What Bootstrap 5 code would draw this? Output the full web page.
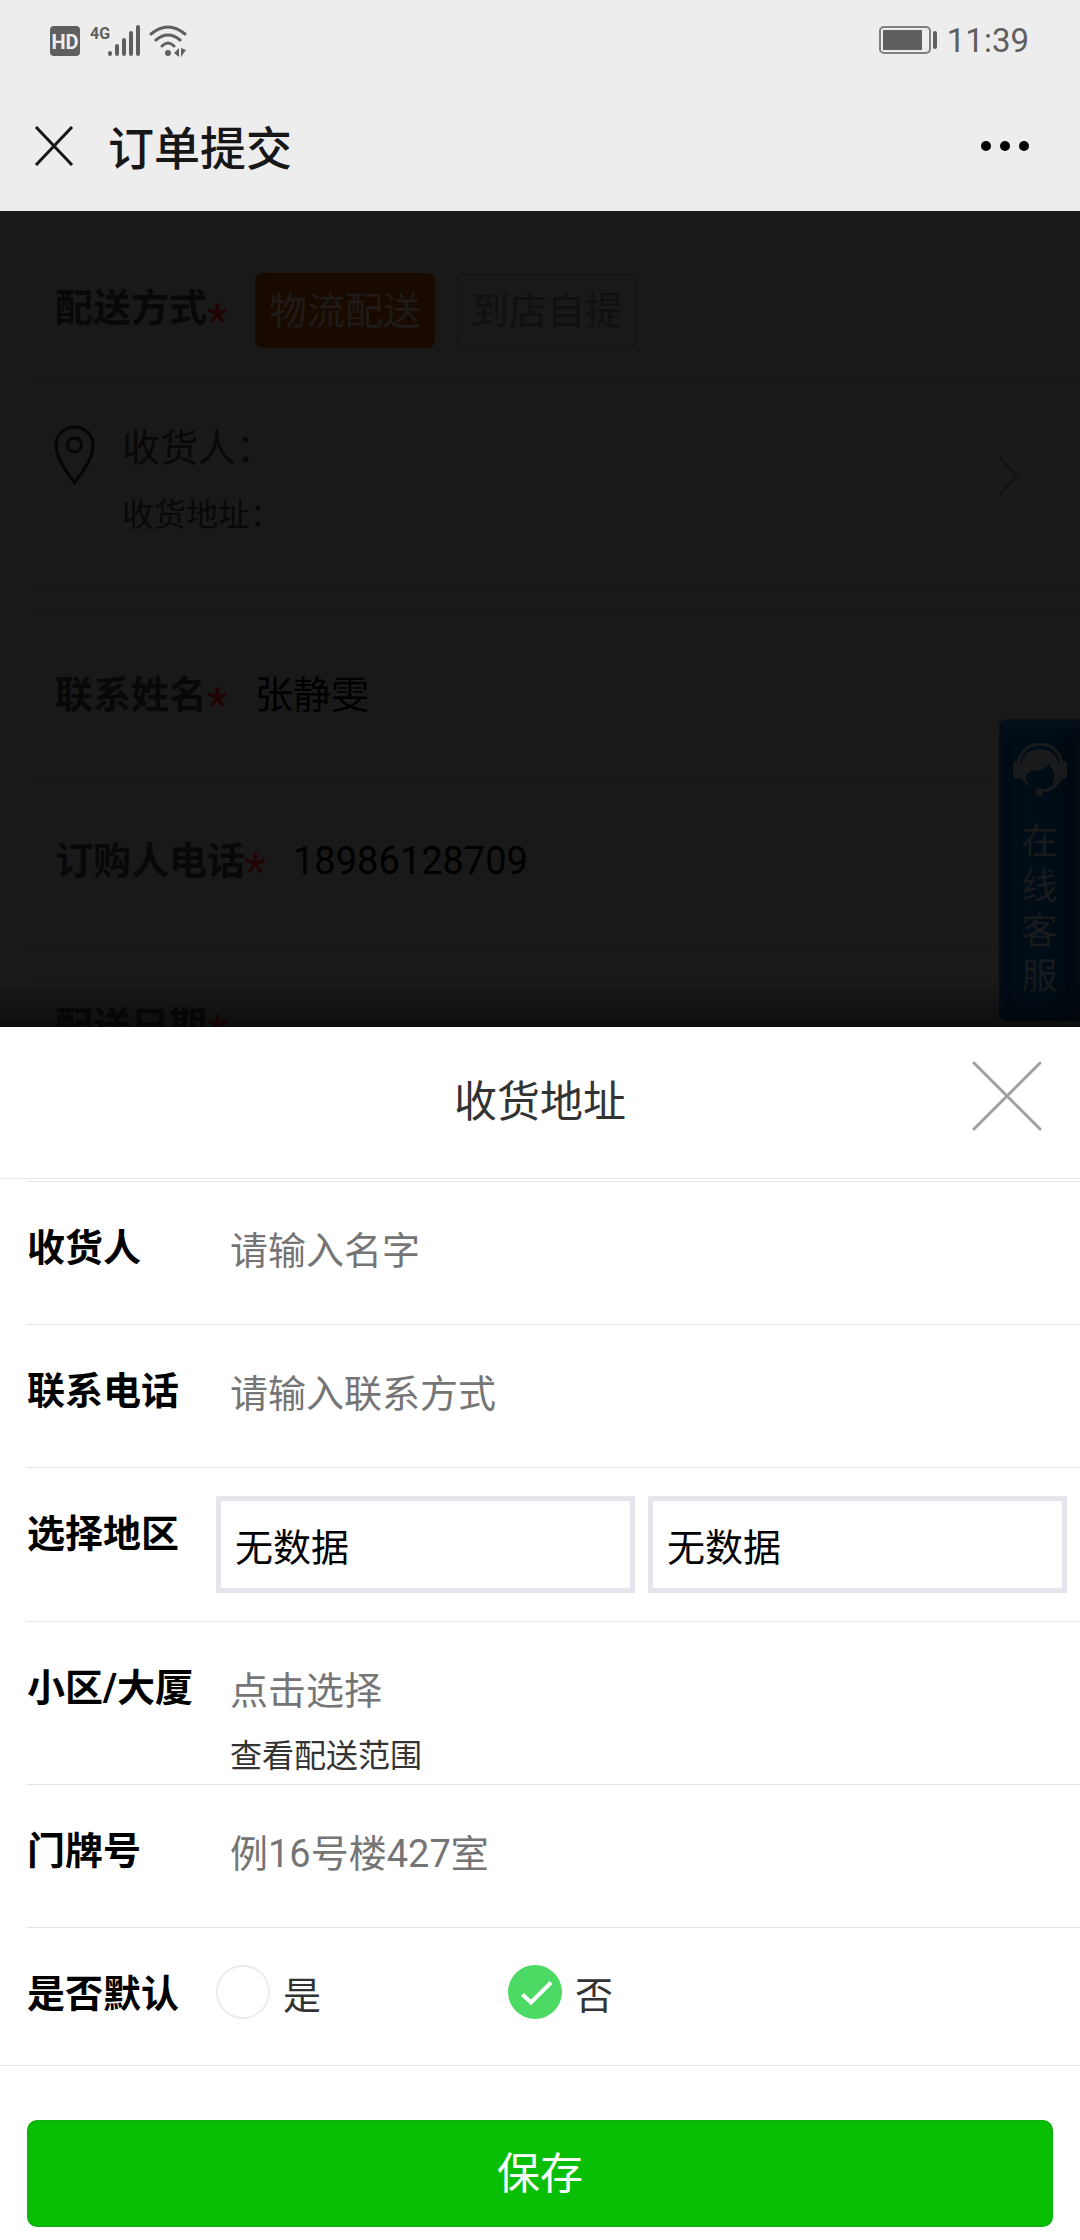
<!DOCTYPE html>
<html lang="zh-CN">
<head>
<meta charset="utf-8">
<meta name="viewport" content="width=device-width, initial-scale=1">
<title>订单提交</title>
<link href="https://cdn.jsdelivr.net/npm/bootstrap@5.3.0/dist/css/bootstrap.min.css" rel="stylesheet">
<script src="https://cdn.jsdelivr.net/npm/bootstrap@5.3.0/dist/js/bootstrap.bundle.min.js" defer></script>
<style>
  body { font-family: Roboto, "Noto Sans CJK SC", sans-serif; font-size: 38px; line-height: 54px; background: #fff; color: #333; }
  svg { display: block; flex: none; }
  .bare { border: 0; background: none; padding: 0; color: inherit; }
  .text-small { font-size: 32px; line-height: 48px; }

  .top-area { background: #ededed; color: #171717; }
  .status-bar { height: 80px; padding: 0 51px 0 50px; color: #5f5f5f; }
  .clock { font-size: 33px; line-height: 40px; padding-top: 2px; }
  .title-bar { height: 131px; padding: 0 51px 0 34px; }
  .title-bar h1 { font-size: 46px; line-height: 60px; font-weight: 500; padding: 6px 0 0 34px; }

  /* order page, dimmed while the address sheet is open */
  .order { background: #191919; color: #080808; height: 816px; overflow: hidden; position: relative; }
  .order-row { margin-left: 27px; padding: 52px 28px 59px; border-bottom: 1px solid #161616; display: flex; }
  .order-row label, .key-bold { font-weight: 700; }
  .order-row.ways { padding: 62px 28px 34px; align-items: center; }
  .ways .key-bold { padding-bottom: 6px; }
  .order-row.to { padding: 38px 61px 48px 27px; gap: 27px; }
  .order-row.gap-line { padding: 0; height: 28px; }
  .order-row.thin { padding: 0; height: 3px; }
  .need { color: #210303; font-size: 48px; line-height: 54px; height: 54px; padding-top: 10px; width: 48px; flex: none; }
  .pick { height: 75px; border-radius: 8px; border: 2px solid #161616; color: #101010; padding: 0 12px; margin-right: 22px; background: none; }
  .pick.on { background: #190a00; border-color: #190a00; color: #1e1b19; }
  .order-input { border: 0; background: none; color: #000; padding: 0; height: 54px; flex: 1; min-width: 0; }
  .go { margin-top: 36px; }
  .service { position: absolute; right: 0; top: 508px; width: 81px; border-radius: 8px 0 0 8px; background: linear-gradient(90deg, #020c15, #000d17 50%, #00090f); box-shadow: inset 0 10px 12px #07111a; color: #191a1b; font-size: 36px; line-height: 45px; text-decoration: none; padding: 24px 0 21px; }
  .service svg { margin-bottom: 22px; }
  .sheet-shadow { position: absolute; left: 0; right: 0; bottom: 0; height: 48px; background: linear-gradient(transparent, rgba(0,0,0,.45)); }

  .sheet-head { height: 152px; border-bottom: 1px solid #e5e5e5; margin-bottom: 2px; }
  .sheet-head h2 { font-size: 43px; line-height: 60px; padding-bottom: 2px; }
  .side { flex: 1 1 0; padding: 0 38px 14px; }
  .form-line { margin-left: 27px; border-top: 1px solid #e5e5e5; padding-bottom: 46px; }
  .form-line.last { padding-bottom: 42px; }
  .key { width: 189px; flex: none; color: #000; font-weight: 700; padding-top: 39px; }
  .val { flex: 1; min-width: 0; }
  .entry { border: 0; background: none; width: 100%; height: 54px; padding: 0 14px; margin-top: 42px; display: block; color: #000; }
  .entry::placeholder { color: #757575; opacity: 1; }
  .range-link { color: #333; text-decoration: none; margin: 14px 14px 0; }
  .areas { gap: 13px; padding: 28px 13px 28px 0; }
  .area { appearance: none; height: 97px; border: 5px solid #e5e6eb; border-radius: 0; background: #fff; color: #000; padding: 6px 14px 0; flex: 1 1 0; min-width: 0; }
  .option { width: 292px; gap: 13px; padding-top: 37px; }
  .choice { appearance: none; width: 54px; height: 54px; margin: 0; border: 2px solid #ececec; border-radius: 50%; flex: none; }
  .choice:checked { border: 0; background: #4cd964 url("data:image/svg+xml,%3Csvg xmlns='http://www.w3.org/2000/svg' viewBox='0 0 54 54'%3E%3Cpath d='M14.500 29.500l8.500 8 20-20' fill='none' stroke='%23fff' stroke-width='4'/%3E%3C/svg%3E"); }
  .option label { padding-top: 4px; }
  .save-wrap { border-top: 1px solid #e5e5e5; padding: 54px 27px 12px; }
  .save { height: 107px; border-radius: 10px; background: #09bf05; border: 2px solid #0cb40b; color: #fff; font-size: 43px; line-height: 60px; }
</style>
</head>
<body>
<header class="top-area">
  <div class="status-bar d-flex align-items-center justify-content-between">
    <svg width="140" height="34" viewBox="0 0 140 34" fill="currentColor" role="img" aria-label="HD 4G Wi-Fi">
      <rect x="0" y="3" width="30" height="30" rx="4"/>
      <text x="15" y="26" text-anchor="middle" font-family="Roboto" font-size="20" font-weight="700" fill="#ededed">HD</text>
      <text x="40" y="16" font-family="Roboto" font-size="16" font-weight="700">4G</text>
      <path d="M60 30v1M67 23v8M74 17v14M81 10v21M88 4v27" stroke="currentColor" stroke-width="4" stroke-linecap="round"/>
      <path d="M101 11q17-14 34 0M106 17q12-10 24 0M112 23q6-6 12 0" fill="none" stroke="currentColor" stroke-width="3" stroke-linecap="round"/>
      <circle cx="118" cy="30" r="3"/><path d="M129 25v9l-5-4zM131 25v9l5-7z"/>
    </svg>
    <div class="d-flex align-items-center">
      <svg class="me-2" width="60" height="28" viewBox="0 0 60 28"><rect x="1" y="1" width="50" height="26" rx="4" fill="none" stroke="#808080" stroke-width="2"/><rect x="4" y="4" width="39" height="20" fill="#5f5f5f"/><rect x="54" y="5" width="4" height="18" rx="2" fill="#5f5f5f"/></svg>
      <time class="clock">11:39</time>
    </div>
  </div>
  <div class="title-bar d-flex align-items-center">
    <button class="bare" type="button" aria-label="关闭"><svg width="40" height="40" viewBox="0 0 40 40" stroke="currentColor" stroke-width="3"><path d="M2 1l36 38M38 1L2 39"/></svg></button>
    <h1 class="mb-0 me-auto">订单提交</h1>
    <button class="bare" type="button" aria-label="更多"><svg width="48" height="10" viewBox="0 0 48 10" fill="#000"><circle cx="5" cy="5" r="5"/><circle cx="24" cy="5" r="5"/><circle cx="43" cy="5" r="5"/></svg></button>
  </div>
</header>

<main class="order">
  <div class="order-row ways">
    <span class="key-bold">配送方式</span><span class="need">*</span>
    <button class="pick on" type="button">物流配送</button>
    <button class="pick" type="button">到店自提</button>
  </div>
  <div class="order-row to">
    <svg class="mt-1" width="41" height="61" viewBox="0 0 41 61" fill="none" stroke="#050505" stroke-width="3"><path d="M20.500 58C13 47 2 34 2 20a18.500 18 0 0 1 37 0c0 14-11 27-18.500 38z"/><circle cx="20.500" cy="20" r="7"/></svg>
    <div class="flex-fill">
      <div>收货人：</div>
      <div class="text-small mt-3">收货地址：</div>
    </div>
    <svg class="go" width="20" height="38" viewBox="0 0 20 38" fill="none" stroke="#111" stroke-width="2"><path d="M1 1l17 18L1 37"/></svg>
  </div>
  <div class="order-row gap-line"></div>
  <div class="order-row">
    <label for="contact">联系姓名</label><span class="need">*</span>
    <input class="order-input" id="contact" type="text" value="张静雯">
  </div>
  <div class="order-row">
    <label for="buyer-tel">订购人电话</label><span class="need">*</span>
    <input class="order-input" id="buyer-tel" type="tel" value="18986128709">
  </div>
  <div class="order-row thin"></div>
  <div class="order-row gap-line"></div>
  <div class="order-row pt-3">
    <span class="key-bold pt-1">配送日期</span><span class="need">*</span>
  </div>
  <a class="service d-flex flex-column align-items-center" href="#">
    <svg width="54" height="55" viewBox="0 0 54 55"><path d="M6 20a21 19 0 0 1 42 0" fill="none" stroke="#191a1b" stroke-width="3"/><path d="M48 33c-3 10-11 15-21 15" fill="none" stroke="#191a1b" stroke-width="3"/><g fill="#191a1b"><rect x="0" y="18" width="8" height="18" rx="4"/><rect x="46" y="18" width="8" height="18" rx="4"/><circle cx="26" cy="49" r="4"/><path d="M8 35V22C10 10 18 6 27 6s18 6 19 16v12c-2 5-5 8-8 9 3-5 4-9 3-14l-5-8c-3 5-10 7-17 7-4 1-6 3-6 5 0 4 2 7 5 10-5-2-9-5-10-8z"/></g></svg>
    <span>在</span><span>线</span><span>客</span><span>服</span>
  </a>
  <div class="sheet-shadow"></div>
</main>

<form class="sheet">
  <div class="sheet-head d-flex align-items-center">
    <div class="side"></div>
    <h2 class="mb-0 fw-normal">收货地址</h2>
    <div class="side d-flex justify-content-end">
      <button class="bare" type="button" aria-label="关闭"><svg width="70" height="70" viewBox="0 0 70 70" stroke="#a0a0a0" stroke-width="3" stroke-linecap="round"><path d="M2 2l66 66M68 2L2 68"/></svg></button>
    </div>
  </div>
  <div class="form-line d-flex">
    <label class="key" for="receiver">收货人</label>
    <div class="val"><input class="entry" id="receiver" type="text" placeholder="请输入名字"></div>
  </div>
  <div class="form-line d-flex">
    <label class="key" for="phone">联系电话</label>
    <div class="val"><input class="entry" id="phone" type="tel" placeholder="请输入联系方式"></div>
  </div>
  <div class="form-line d-flex pb-0">
    <label class="key" for="area-a">选择地区</label>
    <div class="val areas d-flex">
      <select class="area" id="area-a"><option>无数据</option></select>
      <select class="area" aria-label="选择地区"><option>无数据</option></select>
    </div>
  </div>
  <div class="form-line d-flex pb-1">
    <label class="key" for="building">小区/大厦</label>
    <div class="val">
      <input class="entry" id="building" type="text" placeholder="点击选择">
      <a class="range-link text-small d-inline-block align-top" href="#">查看配送范围</a>
    </div>
  </div>
  <div class="form-line d-flex">
    <label class="key" for="door">门牌号</label>
    <div class="val"><input class="entry" id="door" type="text" placeholder="例16号楼427室"></div>
  </div>
  <div class="form-line last d-flex" role="radiogroup" aria-labelledby="default-key">
    <span class="key" id="default-key">是否默认</span>
    <div class="option d-flex"><input class="choice" type="radio" name="default" id="def-yes"><label for="def-yes">是</label></div>
    <div class="option d-flex"><input class="choice" type="radio" name="default" id="def-no" checked><label for="def-no">否</label></div>
  </div>
  <div class="save-wrap"><button class="save w-100" type="button">保存</button></div>
</form>
</body>
</html>
